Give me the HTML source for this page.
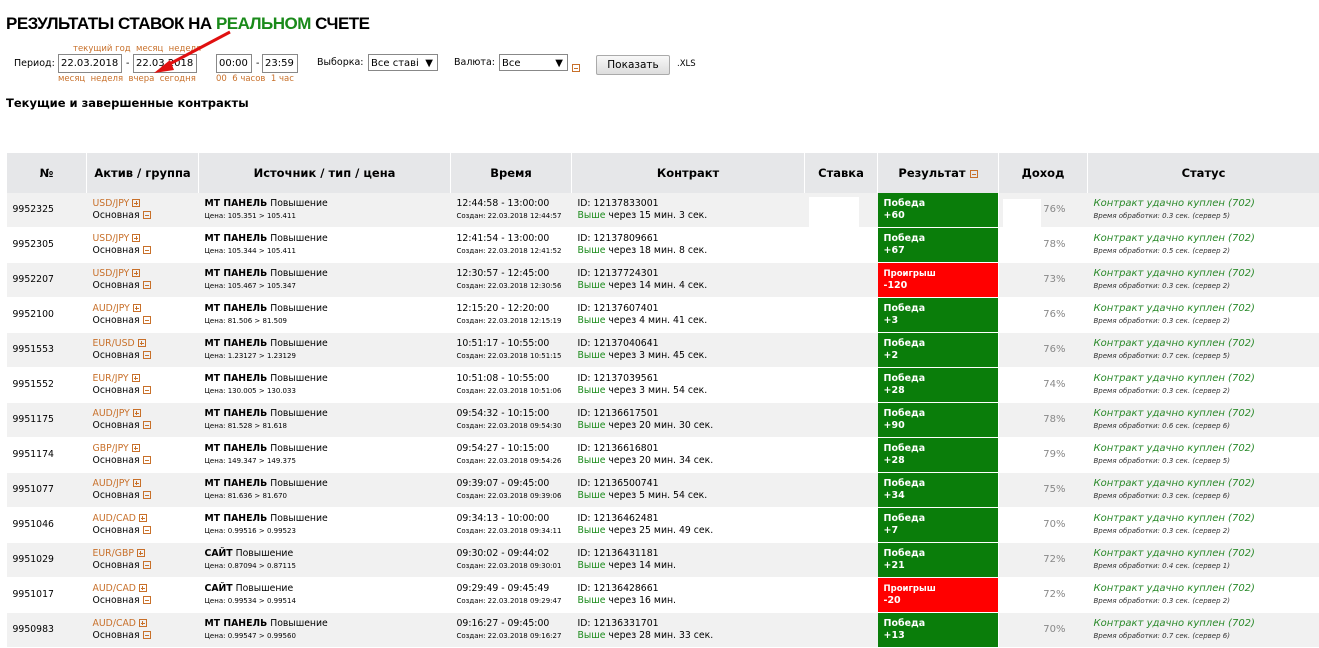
<!DOCTYPE html>
<html><head><meta charset="utf-8"><style>
body{margin:0;background:#fff;font-family:"DejaVu Sans","Liberation Sans",sans-serif;color:#000;width:1319px;height:642px;overflow:hidden;position:relative}
.abs{position:absolute;white-space:nowrap}
h1{position:absolute;left:6px;top:14px;margin:0;font:bold 17px "Liberation Sans",sans-serif;letter-spacing:-0.5px}
.g{color:#1a8a1a}
.o{color:#c8702a;font-size:8.5px}
.inp{position:absolute;height:17px;border:1px solid #888;background:#fff;font-size:10px;line-height:17px;padding-left:2px;box-sizing:border-box;overflow:hidden;white-space:nowrap}
.lab{font-size:9.5px}
table{position:absolute;left:6px;top:153px;border-collapse:collapse;table-layout:fixed;width:1313px;font-size:9.3px}
th{background:#e6e7e9;height:40px;font-size:11.5px;font-weight:bold;border-left:1px solid #fff;border-right:1px solid #fff;padding:0}
td{height:34px;border:1px solid #fff;border-width:0 0 1px 0;padding:0 0 0 6px;vertical-align:middle;line-height:12px;white-space:nowrap;overflow:hidden}
tr.a td{background:#f1f1f1}
.sm{font-size:7px}
.as{color:#c8702a}
.bx{display:inline-block;width:8px;height:8px;border:1px solid #c8702a;box-sizing:border-box;vertical-align:-1px;margin-left:3px;position:relative}
.bx:after{content:"";position:absolute;left:1px;right:1px;top:2.5px;height:1px;background:#c8702a}
.p:before{content:"";position:absolute;top:1px;bottom:1px;left:2.5px;width:1px;background:#c8702a}
.win{background:#0a7d0a!important;color:#fff;font-weight:bold;font-size:9.5px;border-right:1px solid #fff!important}
.los{background:#f00!important;color:#fff;font-weight:bold;font-size:9.5px;border-right:1px solid #fff!important}
.pct{color:#888;font-size:10px;text-align:right;padding-right:22px;position:relative}
.st{color:#2a8a2a;font-style:italic;font-size:10px}
.st .sm{color:#333}
.wb{position:relative}
.wb i{position:absolute;left:4px;top:4px;width:50px;height:31px;background:#fff}
.pct i{position:absolute;left:4px;top:6px;width:38px;height:29px;background:#fff}
</style></head><body>
<h1>РЕЗУЛЬТАТЫ СТАВОК НА <span class="g">РЕАЛЬНОМ</span> СЧЕТЕ</h1>
<div class="abs o" style="left:73px;top:44px">текущий год &nbsp;месяц &nbsp;неделя</div>
<div class="abs lab" style="left:14px;top:58px">Период:</div>
<div class="inp" style="left:58px;top:54px;width:64px;height:19px">22.03.2018</div>
<div class="abs lab" style="left:126px;top:58px">-</div>
<div class="inp" style="left:133px;top:54px;width:64px;height:19px">22.03.2018</div>
<div class="abs o" style="left:58px;top:74px">месяц &nbsp;неделя &nbsp;вчера &nbsp;сегодня</div>
<div class="inp" style="left:216px;top:54px;width:36px;height:19px">00:00</div>
<div class="abs lab" style="left:256px;top:58px">-</div>
<div class="inp" style="left:262px;top:54px;width:36px;height:19px">23:59</div>
<div class="abs o" style="left:216px;top:74px">00 &nbsp;6 часов &nbsp;1 час</div>
<div class="abs lab" style="left:317px;top:57px">Выборка:</div>
<div class="inp" style="left:368px;top:54px;width:70px">Все ставі <span style="position:absolute;right:4px;background:#fff">▼</span></div>
<div class="abs lab" style="left:454px;top:57px">Валюта:</div>
<div class="inp" style="left:499px;top:54px;width:69px">Все <span style="position:absolute;right:4px">▼</span></div>
<span class="bx abs" style="left:569px;top:56px"></span>
<div class="abs" style="left:596px;top:55px;width:72px;height:18px;border:1px solid #aaa;border-radius:2px;background:linear-gradient(#f8f8f8,#ddd);font-size:10.5px;text-align:center;line-height:18px">Показать</div>
<div class="abs" style="left:677px;top:59px;font-size:8.5px">.XLS</div>
<svg class="abs" style="left:150px;top:28px" width="90" height="50"><line x1="80" y1="4" x2="12" y2="40" stroke="#e01010" stroke-width="3"/><polygon points="4,45 20,32 24,42" fill="#e01010"/></svg>
<div class="abs" style="left:6px;top:96px;font-size:11.5px;font-weight:bold">Текущие и завершенные контракты</div>
<table>
<colgroup><col style="width:80px"><col style="width:112px"><col style="width:252px"><col style="width:121px"><col style="width:233px"><col style="width:73px"><col style="width:121px"><col style="width:89px"><col style="width:232px"></colgroup>
<tr><th>№</th><th>Актив / группа</th><th>Источник / тип / цена</th><th>Время</th><th>Контракт</th><th>Ставка</th><th>Результат <span class="bx" style="margin:0"></span></th><th>Доход</th><th>Статус</th></tr>
<tbody id="b">
</tbody></table>
<script>
var d=[
["9952325","USD/JPY","МТ ПАНЕЛЬ","105.351 > 105.411","12:44:58 - 13:00:00","12:44:57","12137833001","15 мин. 3 сек.",1,"+60","76%","0.3","5"],
["9952305","USD/JPY","МТ ПАНЕЛЬ","105.344 > 105.411","12:41:54 - 13:00:00","12:41:52","12137809661","18 мин. 8 сек.",1,"+67","78%","0.5","2"],
["9952207","USD/JPY","МТ ПАНЕЛЬ","105.467 > 105.347","12:30:57 - 12:45:00","12:30:56","12137724301","14 мин. 4 сек.",0,"-120","73%","0.3","2"],
["9952100","AUD/JPY","МТ ПАНЕЛЬ","81.506 > 81.509","12:15:20 - 12:20:00","12:15:19","12137607401","4 мин. 41 сек.",1,"+3","76%","0.3","2"],
["9951553","EUR/USD","МТ ПАНЕЛЬ","1.23127 > 1.23129","10:51:17 - 10:55:00","10:51:15","12137040641","3 мин. 45 сек.",1,"+2","76%","0.7","5"],
["9951552","EUR/JPY","МТ ПАНЕЛЬ","130.005 > 130.033","10:51:08 - 10:55:00","10:51:06","12137039561","3 мин. 54 сек.",1,"+28","74%","0.3","2"],
["9951175","AUD/JPY","МТ ПАНЕЛЬ","81.528 > 81.618","09:54:32 - 10:15:00","09:54:30","12136617501","20 мин. 30 сек.",1,"+90","78%","0.6","6"],
["9951174","GBP/JPY","МТ ПАНЕЛЬ","149.347 > 149.375","09:54:27 - 10:15:00","09:54:26","12136616801","20 мин. 34 сек.",1,"+28","79%","0.3","5"],
["9951077","AUD/JPY","МТ ПАНЕЛЬ","81.636 > 81.670","09:39:07 - 09:45:00","09:39:06","12136500741","5 мин. 54 сек.",1,"+34","75%","0.3","6"],
["9951046","AUD/CAD","МТ ПАНЕЛЬ","0.99516 > 0.99523","09:34:13 - 10:00:00","09:34:11","12136462481","25 мин. 49 сек.",1,"+7","70%","0.3","2"],
["9951029","EUR/GBP","САЙТ","0.87094 > 0.87115","09:30:02 - 09:44:02","09:30:01","12136431181","14 мин.",1,"+21","72%","0.4","1"],
["9951017","AUD/CAD","САЙТ","0.99534 > 0.99514","09:29:49 - 09:45:49","09:29:47","12136428661","16 мин.",0,"-20","72%","0.3","2"],
["9950983","AUD/CAD","МТ ПАНЕЛЬ","0.99547 > 0.99560","09:16:27 - 09:45:00","09:16:27","12136331701","28 мин. 33 сек.",1,"+13","70%","0.7","6"]];
var h="";d.forEach(function(r,i){h+='<tr class="'+(i%2?'':'a')+'"><td>'+r[0]+'</td><td><span class="as">'+r[1]+'</span><span class="bx p"></span><br>Основная<span class="bx"></span></td><td><b>'+r[2]+'</b> Повышение<br><span class="sm">Цена: '+r[3]+'</span></td><td>'+r[4]+'<br><span class="sm">Создан: 22.03.2018 '+r[5]+'</span></td><td>ID: '+r[6]+'<br><span class="g">Выше</span> через '+r[7]+'</td><td class="wb">'+(i==0?'<i></i>':'')+'</td><td class="'+(r[8]?'win':'los')+'">'+(r[8]?'Победа':'<span style="font-size:8.5px">Проигрыш</span>')+'<br>'+r[9]+'</td><td class="pct">'+(i==0?'<i></i>':'')+r[10]+'</td><td class="st">Контракт удачно куплен (702)<br><span class="sm">Время обработки: '+r[11]+' сек. (сервер '+r[12]+')</span></td></tr>'});
document.getElementById("b").innerHTML=h;
</script>
</body></html>
